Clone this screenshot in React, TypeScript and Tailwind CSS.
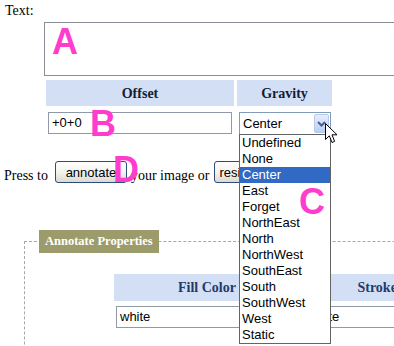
import React from 'react';

const gravities = [
  'Undefined',
  'None',
  'Center',
  'East',
  'Forget',
  'NorthEast',
  'North',
  'NorthWest',
  'SouthEast',
  'South',
  'SouthWest',
  'West',
  'Static'
];

const serif = "font-['Liberation_Serif','Times_New_Roman',serif]";
const sans = "font-['Liberation_Sans',Arial,sans-serif]";

function Marker({ ch, className }: { ch: string; className: string }) {
  return (
    <span
      className={`absolute ${sans} text-[36px] leading-[36px] font-bold text-[#ff3ccd] ${className}`}
    >
      {ch}
    </span>
  );
}

function Cursor() {
  return (
    <svg className="absolute left-[325px] top-[123px]" width="13" height="21" viewBox="0 0 13 21">
      <path
        d="M0.5 0.5 L0.5 16.5 L4.3 12.8 L7 19.5 L9.6 18.4 L7 11.8 L12 11.8 Z"
        fill="#fff"
        stroke="#000"
        strokeWidth="1"
        strokeLinejoin="miter"
      />
    </svg>
  );
}

function XpButton({ children, className }: { children: React.ReactNode; className?: string }) {
  return (
    <button
      className={`h-[22px] rounded-[3px] border border-[#2c4c7c] bg-linear-to-b from-white via-[#f4f3ee] to-[#dcd9cf] ${sans} text-[13px] leading-none text-black ${className ?? ''}`}
    >
      {children}
    </button>
  );
}

export default function App() {
  return (
    <div className={`relative h-[346px] w-[394px] overflow-hidden bg-white text-[14px] text-black ${serif}`}>
      <div className="h-[22px] pl-[5px] pt-[3px] leading-[16px]">Text:</div>

      <div className="ml-[44px] h-[54px] w-[380px] border border-[#8a8e94] bg-white" />

      <div className="ml-[46px] mt-[4px] flex gap-[3px]">
        <div className="flex h-[26px] w-[188px] items-center justify-center bg-[#d3dff5] font-bold text-[#141c33]">
          Offset
        </div>
        <div className="flex h-[26px] w-[95px] items-center justify-center bg-[#d3dff5] font-bold text-[#141c33]">
          Gravity
        </div>
      </div>

      <div className="mt-[6px] flex items-start">
        <div className={`ml-[48px] flex h-[22px] w-[184px] items-center border border-[#8e9aa8] pl-[3px] ${sans} text-[13px]`}>
          +0+0
        </div>
        <div className={`ml-[7px] flex h-[23px] w-[92px] items-center border border-[#7f9db9] pl-[3px] ${sans} text-[13px]`}>
          <span className="flex-1">Center</span>
          <span className="mr-[1px] flex h-[19px] w-[15px] items-center justify-center rounded-[2px] border border-[#b7c8ef] bg-linear-to-b from-[#e6eeff] to-[#bccdf5]">
            <svg width="9" height="6" viewBox="0 0 9 6">
              <path d="M1 1 L4.5 4.5 L8 1" fill="none" stroke="#4a5f8a" strokeWidth="2" />
            </svg>
          </span>
        </div>
      </div>

      <div className="mt-[26px] flex h-[22px] items-center pl-[4px]">
        <span className="mt-[6px]">Press to</span>
        <XpButton className="ml-[7px] w-[72px]">annotate</XpButton>
        <span className="ml-[4px] mt-[6px]">your image or</span>
        <XpButton className="ml-[5px] w-[60px] pl-[4px] text-left">resize</XpButton>
      </div>

      <fieldset className="ml-[24px] mt-[47px] h-[200px] w-[420px] border border-dashed border-[#a8a8a0] pl-[14px]">
        <legend className="h-[23px] bg-[#9b9b6b] px-[6px] text-[12.5px] leading-[23px] font-bold text-white">
          Annotate Properties
        </legend>
        <div className="ml-[75px] mt-[21px] flex gap-[3px]">
          <div className="flex h-[27px] w-[186px] items-center justify-center bg-[#d3dff5] font-bold text-[#243a68]">
            Fill Color
          </div>
          <div className="flex h-[27px] w-[186px] items-center justify-center bg-[#d3dff5] font-bold text-[#243a68]">
            Stroke Color
          </div>
        </div>
        <div className="ml-[77px] mt-[5px] flex gap-[7px]">
          <div className={`flex h-[22px] w-[182px] items-center border border-[#8e9aa8] pl-[3px] ${sans} text-[13px]`}>
            white
          </div>
          <div className={`flex h-[22px] w-[182px] items-center border border-[#8e9aa8] pl-[3px] ${sans} text-[13px]`}>
            white
          </div>
        </div>
      </fieldset>

      <ul className={`absolute left-[239px] top-[134px] w-[92px] border border-[#646464] bg-white ${sans} text-[13px]`}>
        {gravities.map((g) => (
          <li
            key={g}
            className={`h-[16px] pl-[2px] leading-[16px] ${g === 'Center' ? 'bg-[#316ac5] text-white' : 'text-black'}`}
          >
            {g}
          </li>
        ))}
      </ul>

      <Cursor />

      <Marker ch="A" className="left-[52px] top-[24px]" />
      <Marker ch="B" className="left-[90px] top-[106px]" />
      <Marker ch="D" className="left-[113px] top-[152px]" />
      <Marker ch="C" className="left-[299px] top-[184px]" />
    </div>
  );
}
